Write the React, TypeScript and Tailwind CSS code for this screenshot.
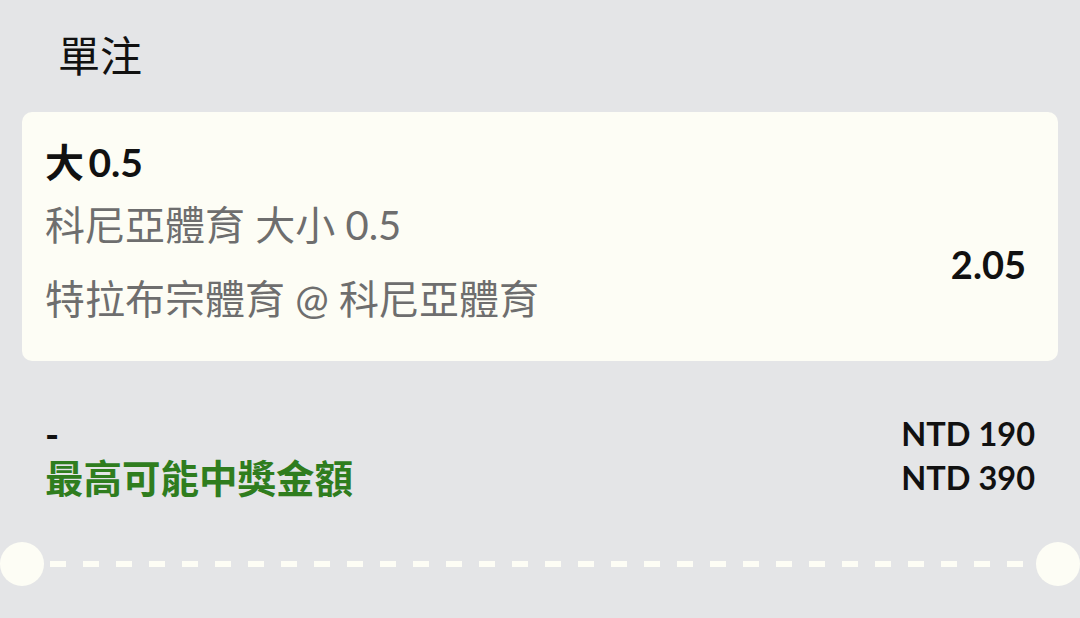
const Ticket = () => {
  return (
    <div className="flex items-center">
      <div className="h-[44px] w-[44px] shrink-0 rounded-full bg-[#fdfdf5]" />
      <div className="mx-[6px] h-[6px] flex-1 bg-[repeating-linear-gradient(90deg,#fdfdf5_0px,#fdfdf5_16px,transparent_16px,transparent_33px)]" />
      <div className="h-[44px] w-[44px] shrink-0 rounded-full bg-[#fdfdf5]" />
    </div>
  );
};

export default function App() {
  return (
    <div className="h-[618px] w-[1080px] overflow-hidden bg-[#e4e5e7] font-['Lato','Noto_Sans_CJK_TC',sans-serif]">
      <h1 className="pl-[58px] pt-[28px] text-[42px] leading-[56px] text-[#111]">
        單注
      </h1>

      <div className="mx-[22px] mt-[28px] rounded-[10px] bg-[#fdfdf5] pb-[38px] pl-[23px] pr-[32px] pt-[30px]">
        <div className="text-[39px] font-bold leading-[40px] text-[#111] [word-spacing:-5px]">
          大 0.5
        </div>
        <div className="mt-[19px] flex items-center justify-between">
          <div className="flex flex-col gap-[26px] text-[40px] leading-[48px] text-[#6e6e6e]">
            <span>科尼亞體育 大小 0.5</span>
            <span>特拉布宗體育 @ 科尼亞體育</span>
          </div>
          <span className="mt-[4px] text-[38px] font-bold leading-[44px] text-[#111]">
            2.05
          </span>
        </div>
      </div>

      <div className="mt-[51px] flex justify-between pl-[45px] pr-[45px]">
        <div className="flex flex-col">
          <span className="text-[38px] font-bold leading-[44px] text-[#111]">
            -
          </span>
          <span className="text-[38.5px] font-bold leading-[44px] text-[#2f7d1e]">
            最高可能中獎金額
          </span>
        </div>
        <div className="flex flex-col items-end text-[32.5px] font-bold leading-[44px] text-[#111]">
          <span>NTD 190</span>
          <span>NTD 390</span>
        </div>
      </div>

      <div className="mt-[42px]">
        <Ticket />
      </div>
    </div>
  );
}
